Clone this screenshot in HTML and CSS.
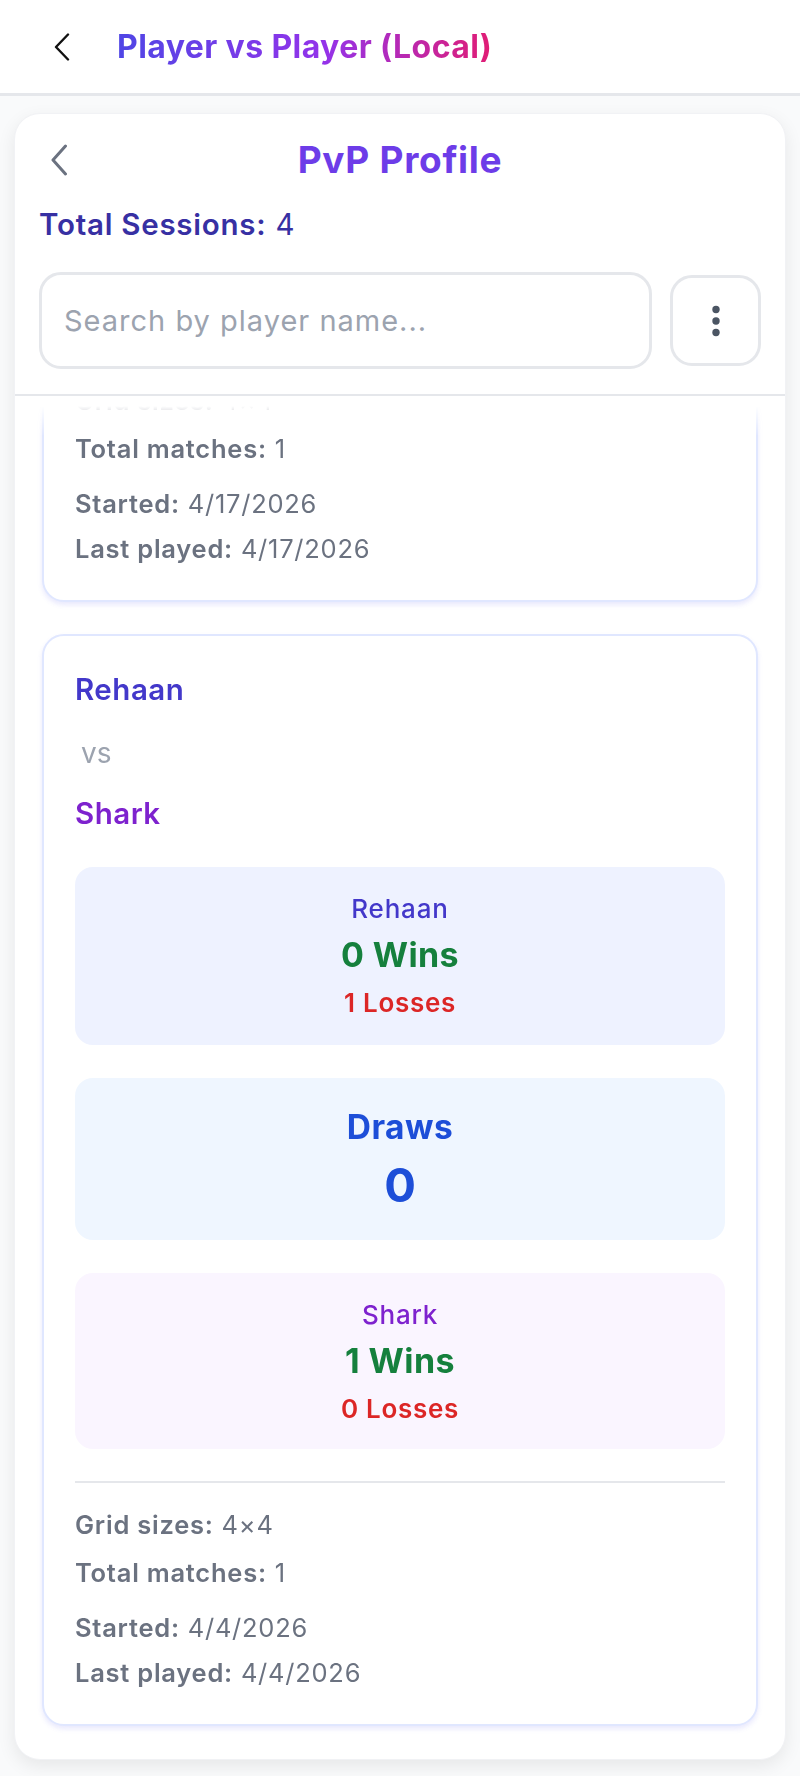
FILE: index.html
```html
<!DOCTYPE html>
<html>
  <head>
    <title>PvP Profile</title>
    <link rel="stylesheet" href="styles.css">
  </head>
  <body>
    <header class="topbar">
      <button class="icon-btn" aria-label="Back">
        <svg width="20" height="28" viewBox="0 0 20 28"><path d="M16 1.5 L4 14 L16 26.5" fill="none" stroke="#111" stroke-width="2.4" stroke-linecap="round" stroke-linejoin="round"/></svg>
      </button>
      <h1 class="topbar-title">Player vs Player (Local)</h1>
    </header>

    <main class="page">
      <section class="profile">
        <div class="profile-head">
          <div class="title-row">
            <button class="icon-btn" aria-label="Back">
              <svg width="20" height="32" viewBox="0 0 20 32"><path d="M16.5 2 L4 16 L16.5 30" fill="none" stroke="#6b7280" stroke-width="3" stroke-linecap="round" stroke-linejoin="round"/></svg>
            </button>
            <h2 class="profile-title">PvP Profile</h2>
            <span></span>
          </div>
          <p class="sessions"><strong>Total Sessions:</strong> 4</p>
          <div class="search-row">
            <input class="search" type="text" placeholder="Search by player name..." />
            <button class="menu-btn" aria-label="More">
              <svg width="10" height="32" viewBox="0 0 10 32"><circle cx="5" cy="4.5" r="3.7" fill="#4b5563"/><circle cx="5" cy="16" r="3.7" fill="#4b5563"/><circle cx="5" cy="27.5" r="3.7" fill="#4b5563"/></svg>
            </button>
          </div>
        </div>

        <div class="session-list">
          <!-- list is scrolled: first card is partly out of view -->
          <article class="session-card scrolled">
            <div class="meta">
              <div class="meta-counts">
                <p><b>Grid sizes:</b> 4×4</p>
                <p><b>Total matches:</b> 1</p>
              </div>
              <div class="meta-dates">
                <p><b>Started:</b> 4/17/2026</p>
                <p><b>Last played:</b> 4/17/2026</p>
              </div>
            </div>
          </article>

          <article class="session-card">
            <div class="players">
              <span class="player-a">Rehaan</span>
              <span class="vs">vs</span>
              <span class="player-b">Shark</span>
            </div>

            <div class="stats">
              <div class="stat-box box-a">
                <div class="stat-name name-a">Rehaan</div>
                <div class="wins">0 Wins</div>
                <div class="losses">1 Losses</div>
              </div>
              <div class="stat-box box-draw">
                <div class="draw-label">Draws</div>
                <div class="draw-count">0</div>
              </div>
              <div class="stat-box box-b">
                <div class="stat-name name-b">Shark</div>
                <div class="wins">1 Wins</div>
                <div class="losses">0 Losses</div>
              </div>
            </div>

            <div class="meta with-line">
              <div class="meta-counts">
                <p><b>Grid sizes:</b> 4×4</p>
                <p><b>Total matches:</b> 1</p>
              </div>
              <div class="meta-dates">
                <p><b>Started:</b> 4/4/2026</p>
                <p><b>Last played:</b> 4/4/2026</p>
              </div>
            </div>
          </article>
        </div>
      </section>
    </main>
  </body>
</html>
```

FILE: styles.css
```css
body {
  margin: 0;
  font-family: Inter, "Noto Sans", sans-serif;
  background-color: #f9fafb;
}
p {
  margin: 0;
}
button {
  font-family: inherit;
  cursor: pointer;
}
.icon-btn {
  width: 40px;
  height: 40px;
  padding: 0;
  border: none;
  background: none;
  display: flex;
  align-items: center;
  justify-content: center;
}

/* top bar */
.topbar {
  box-sizing: border-box;
  height: 96px;
  display: flex;
  align-items: center;
  gap: 35px;
  padding-left: 42px;
  background-color: #fff;
  border-bottom: 3px solid #e5e7eb;
}
.topbar-title {
  margin: 0;
  font-size: 32px;
  font-weight: 700;
  letter-spacing: 0.4px;
  line-height: 40px;
  background: linear-gradient(90deg, #4f46e5, #9333ea 55%, #e11d74);
  -webkit-background-clip: text;
  background-clip: text;
  color: transparent;
}

/* profile card */
.page {
  padding: 17px 14px 17px;
}
.profile {
  background-color: #fff;
  border: 1px solid #f1f2f5;
  border-radius: 26px;
  box-shadow: 0 6px 18px rgba(0, 0, 0, 0.08);
  overflow: hidden;
}
.profile-head {
  padding: 18px 24px 25px 24px;
  border-bottom: 2px solid #e5e7eb;
}
.title-row {
  display: grid;
  grid-template-columns: 40px 1fr 40px;
  align-items: center;
  height: 56px;
}
.profile-title {
  margin: 0;
  text-align: center;
  font-size: 37px;
  font-weight: 700;
  letter-spacing: 0.7px;
  line-height: 56px;
  color: #6d3ce8;
}
.sessions {
  margin-top: 18px;
  font-size: 29.5px;
  letter-spacing: 0.75px;
  line-height: 36px;
  color: #3730a3;
}
.sessions strong {
  font-weight: 600;
}
.search-row {
  display: flex;
  align-items: center;
  gap: 18px;
  margin-top: 30px;
}
.search {
  flex: 1;
  min-width: 0;
  box-sizing: border-box;
  height: 97px;
  padding: 0 22px;
  border: 3px solid #e5e7eb;
  border-radius: 22px;
  font-family: inherit;
  font-size: 29px;
  letter-spacing: 1px;
  color: #111827;
  outline: none;
}
.search::placeholder {
  color: #9ca3af;
}
.menu-btn {
  box-sizing: border-box;
  width: 91px;
  height: 91px;
  border: 3px solid #e5e7eb;
  border-radius: 22px;
  background-color: #fff;
  display: flex;
  align-items: center;
  justify-content: center;
}

/* session list */
.session-list {
  overflow: hidden;
  padding: 0 27px 33px;
  -webkit-mask-image: linear-gradient(to bottom, transparent 0, transparent 10px, #000 40px);
  mask-image: linear-gradient(to bottom, transparent 0, transparent 10px, #000 40px);
}
.session-card {
  background-color: #fff;
  border: 2px solid #e0e7ff;
  border-radius: 22px;
  padding: 35px 31px 34px;
  box-shadow: 0 3px 5px rgba(99, 102, 241, 0.14);
}
.session-card + .session-card {
  margin-top: 32px;
}
.session-card.scrolled {
  margin-top: -49px;
  border-top-left-radius: 0;
  border-top-right-radius: 0;
}
.players {
  display: flex;
  flex-direction: column;
  align-items: flex-start;
}
.player-a,
.player-b {
  font-size: 29.5px;
  font-weight: 600;
  letter-spacing: 0.5px;
  line-height: 36px;
}
.player-a {
  color: #4338ca;
}
.player-b {
  margin-top: 26px;
  color: #7e22ce;
}
.vs {
  margin-top: 30px;
  padding-left: 6px;
  font-size: 28px;
  line-height: 32px;
  color: #9ca3af;
}
.stats {
  display: flex;
  flex-direction: column;
  gap: 33px;
  margin-top: 36px;
}
.stat-box {
  border-radius: 18px;
  padding: 24px 16px;
  text-align: center;
}
.box-a {
  background-color: #eef2ff;
}
.box-draw {
  background-color: #eff6ff;
  padding: 29px 16px 27px;
}
.box-b {
  background-color: #faf5ff;
  padding: 24px 16px 22px;
}
.stat-name {
  font-size: 26px;
  font-weight: 500;
  letter-spacing: 0.8px;
  line-height: 36px;
}
.name-a {
  color: #4338ca;
}
.name-b {
  color: #7e22ce;
}
.wins {
  margin: 6px 0 8px;
  font-size: 34px;
  font-weight: 700;
  letter-spacing: 0.4px;
  line-height: 44px;
  color: #15803d;
}
.losses {
  font-size: 26px;
  font-weight: 600;
  letter-spacing: 0.7px;
  line-height: 36px;
  color: #dc2626;
}
.draw-label {
  font-size: 33.5px;
  font-weight: 700;
  letter-spacing: 0.45px;
  line-height: 40px;
  color: #1d4ed8;
}
.draw-count {
  margin-top: 10px;
  font-size: 47px;
  font-weight: 700;
  line-height: 56px;
  color: #1d4ed8;
}
.meta.with-line {
  margin-top: 32px;
  padding-top: 25px;
  border-top: 2px solid #e5e7eb;
}
.meta p {
  font-size: 25.5px;
  letter-spacing: 0.75px;
  line-height: 34px;
  color: #6b7280;
}
.meta b {
  font-weight: 600;
}
.meta-counts p + p {
  margin-top: 14px;
}
.meta-dates {
  margin-top: 21px;
}
.meta-dates p + p {
  margin-top: 11px;
}
```
